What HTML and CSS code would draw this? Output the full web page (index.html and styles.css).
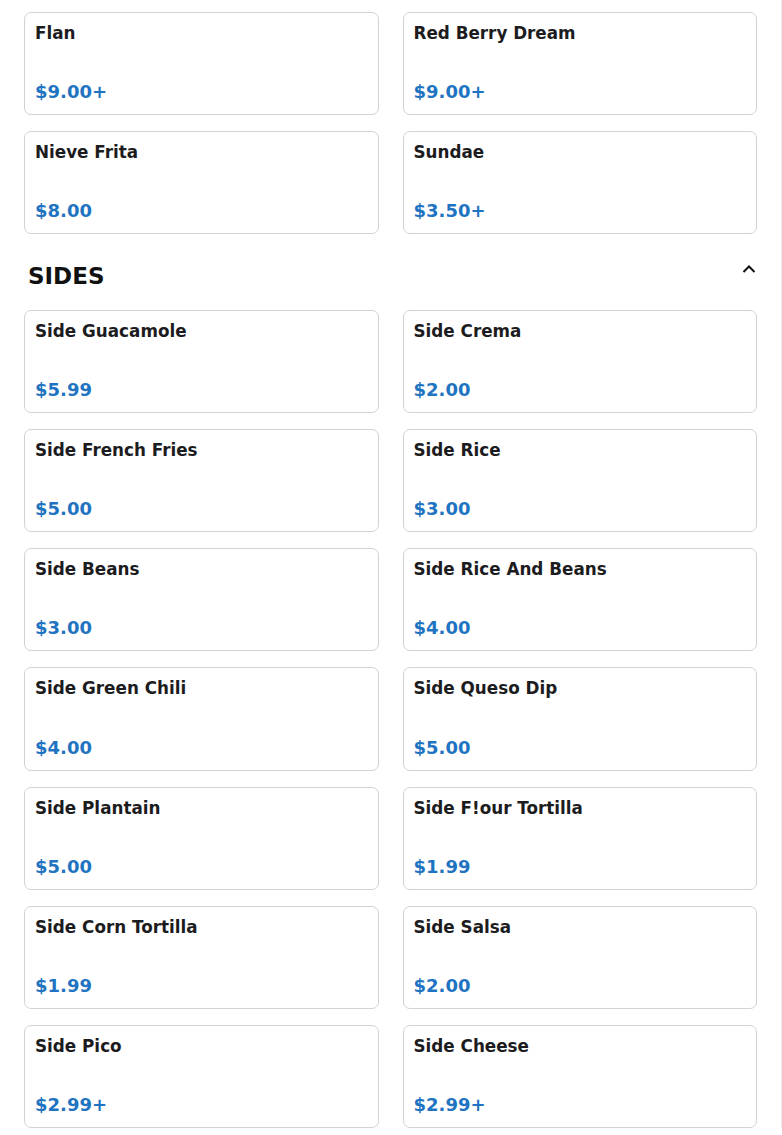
FILE: index.html
```html
<!DOCTYPE html>
<html>
<head>
<meta charset="utf-8">
<link rel="stylesheet" href="styles.css">
</head>
<body>
<div class="page">
  <section class="section">
    <div class="grid">
      <div class="card"><div class="name">Flan</div><div class="price">$9.00+</div></div>
      <div class="card"><div class="name">Red Berry Dream</div><div class="price">$9.00+</div></div>
      <div class="card"><div class="name">Nieve Frita</div><div class="price">$8.00</div></div>
      <div class="card"><div class="name">Sundae</div><div class="price">$3.50+</div></div>
    </div>
  </section>
  <section class="section">
    <div class="section-head">
      <h2 class="section-title">SIDES</h2>
      <svg class="chevron" width="14" height="10" viewBox="0 0 14 10"><path d="M1.5 8 L7 2.5 L12.5 8" fill="none" stroke="#111" stroke-width="2"/></svg>
    </div>
    <div class="grid">
      <div class="card"><div class="name">Side Guacamole</div><div class="price">$5.99</div></div>
      <div class="card"><div class="name">Side Crema</div><div class="price">$2.00</div></div>
      <div class="card"><div class="name">Side French Fries</div><div class="price">$5.00</div></div>
      <div class="card"><div class="name">Side Rice</div><div class="price">$3.00</div></div>
      <div class="card"><div class="name">Side Beans</div><div class="price">$3.00</div></div>
      <div class="card"><div class="name">Side Rice And Beans</div><div class="price">$4.00</div></div>
      <div class="card"><div class="name">Side Green Chili</div><div class="price">$4.00</div></div>
      <div class="card"><div class="name">Side Queso Dip</div><div class="price">$5.00</div></div>
      <div class="card"><div class="name">Side Plantain</div><div class="price">$5.00</div></div>
      <div class="card"><div class="name">Side F!our Tortilla</div><div class="price">$1.99</div></div>
      <div class="card"><div class="name">Side Corn Tortilla</div><div class="price">$1.99</div></div>
      <div class="card"><div class="name">Side Salsa</div><div class="price">$2.00</div></div>
      <div class="card"><div class="name">Side Pico</div><div class="price">$2.99+</div></div>
      <div class="card"><div class="name">Side Cheese</div><div class="price">$2.99+</div></div>
    </div>
  </section>
</div>
</body>
</html>
```

FILE: styles.css
```css
html, body {
  margin: 0;
  padding: 0;
  background: #fff;
}
body {
  font-family: "DejaVu Sans", sans-serif;
  color: #1c1c1e;
  overflow: hidden;
}
.page {
  padding: 12px 24px 0 24px;
  border-right: 1px solid #ececec;
  width: 733px;
}
.grid {
  display: grid;
  grid-template-columns: 1fr 1fr;
  column-gap: 24px;
  row-gap: 16px;
}
.card {
  box-sizing: border-box;
  height: 103.1px;
  border: 1px solid #d3d3d3;
  border-radius: 7px;
  padding: 9px 10px 11px 10px;
  display: flex;
  flex-direction: column;
  justify-content: space-between;
}
.name {
  font-size: 16.8px;
  font-weight: bold;
  line-height: 22px;
  color: #1c1c1e;
}
.price {
  font-size: 18px;
  font-weight: bold;
  line-height: 22px;
  color: #1f74c2;
}
.section-head {
  display: flex;
  justify-content: space-between;
  align-items: flex-start;
  margin: 24px 0 16px 0;
  height: 36px;
}
.section-title {
  margin: 0 0 0 4px;
  font-size: 23px;
  font-weight: bold;
  line-height: 36px;
  color: #111;
}
.chevron {
  margin: 6px 1px 0 0;
}
```
